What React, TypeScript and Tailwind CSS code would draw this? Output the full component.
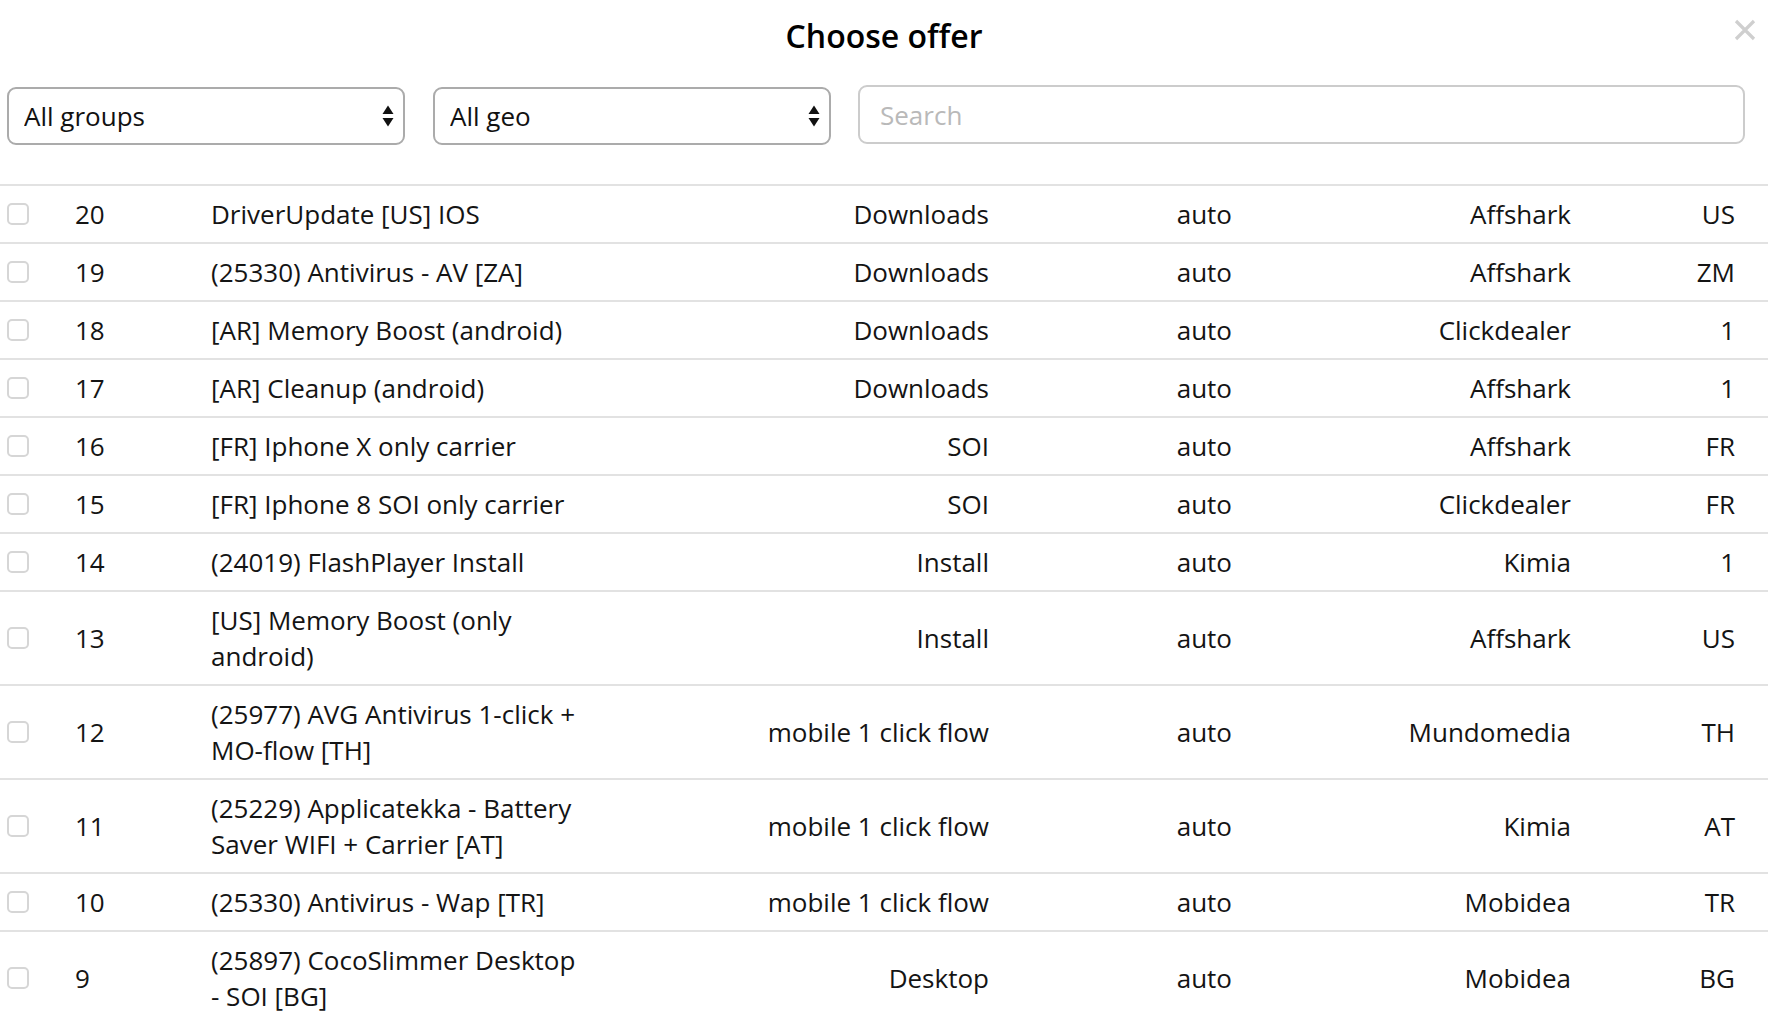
import { useState } from "react";

const offers = [
  { id: 20, name: "DriverUpdate [US] IOS", type: "Downloads", mode: "auto", network: "Affshark", geo: "US" },
  { id: 19, name: "(25330) Antivirus - AV [ZA]", type: "Downloads", mode: "auto", network: "Affshark", geo: "ZM" },
  { id: 18, name: "[AR] Memory Boost (android)", type: "Downloads", mode: "auto", network: "Clickdealer", geo: "1" },
  { id: 17, name: "[AR] Cleanup (android)", type: "Downloads", mode: "auto", network: "Affshark", geo: "1" },
  { id: 16, name: "[FR] Iphone X only carrier", type: "SOI", mode: "auto", network: "Affshark", geo: "FR" },
  { id: 15, name: "[FR] Iphone 8 SOI only carrier", type: "SOI", mode: "auto", network: "Clickdealer", geo: "FR" },
  { id: 14, name: "(24019) FlashPlayer Install", type: "Install", mode: "auto", network: "Kimia", geo: "1" },
  { id: 13, name: "[US] Memory Boost (only android)", type: "Install", mode: "auto", network: "Affshark", geo: "US" },
  { id: 12, name: "(25977) AVG Antivirus 1-click + MO-flow [TH]", type: "mobile 1 click flow", mode: "auto", network: "Mundomedia", geo: "TH" },
  { id: 11, name: "(25229) Applicatekka - Battery Saver WIFI + Carrier [AT]", type: "mobile 1 click flow", mode: "auto", network: "Kimia", geo: "AT" },
  { id: 10, name: "(25330) Antivirus - Wap [TR]", type: "mobile 1 click flow", mode: "auto", network: "Mobidea", geo: "TR" },
  { id: 9, name: "(25897) CocoSlimmer Desktop - SOI [BG]", type: "Desktop", mode: "auto", network: "Mobidea", geo: "BG" },
];

function SelectArrows() {
  return (
    <svg className="pointer-events-none absolute right-[11px] top-1/2 -translate-y-1/2" width="12" height="24" viewBox="0 0 12 24">
      <path d="M6 1.5 L11.5 10 L0.5 10 Z" fill="#111" />
      <path d="M6 22.5 L11.5 14 L0.5 14 Z" fill="#111" />
    </svg>
  );
}

function FakeSelect({ value }: { value: string }) {
  return (
    <div className="relative mt-[2px] w-[398px] h-[58px]">
      <select
        defaultValue={value}
        className="appearance-none w-full h-full rounded-[9px] border-2 border-[#ababab] bg-white pl-[15px] pr-8 text-[26px] text-[#111] outline-none"
      >
        <option>{value}</option>
      </select>
      <SelectArrows />
    </div>
  );
}

export default function App() {
  const [checked, setChecked] = useState<number[]>([]);
  const toggle = (id: number) =>
    setChecked((c) => (c.includes(id) ? c.filter((x) => x !== id) : [...c, id]));

  return (
    <div className="min-h-screen w-full bg-white text-[#141414]" style={{ fontFamily: '"Open Sans", "Noto Sans", sans-serif' }}>
      {/* Header */}
      <div className="relative flex h-[72px] items-center justify-center">
        <h1 className="text-[32px] font-semibold text-black">Choose offer</h1>
        <button className="absolute right-[12px] top-[19px] p-0">
          <svg width="22" height="22" viewBox="0 0 22 22">
            <path d="M2 2 L20 20 M20 2 L2 20" stroke="#cfcfcf" strokeWidth="3.2" />
          </svg>
        </button>
      </div>

      {/* Filters */}
      <div className="mt-[13px] flex items-start pl-[7px] pr-[23px]">
        <FakeSelect value="All groups" />
        <div className="ml-[28px]">
          <FakeSelect value="All geo" />
        </div>
        <input
          placeholder="Search"
          className="ml-[27px] h-[59px] flex-1 rounded-[9px] border-2 border-[#cccccc] px-[20px] text-[26px] outline-none placeholder:text-[#b9b9b9]"
        />
      </div>

      {/* Offers table */}
      <div className="mt-[39px]">
        {offers.map((o) => (
          <div key={o.id} className="flex items-center border-t-2 border-[#e2e2e2] py-[10px] text-[26px] leading-[36px]">
            <div className="w-[75px] pl-[7px]">
              <button
                onClick={() => toggle(o.id)}
                className={`block h-[22px] w-[22px] rounded-[5px] border-2 ${
                  checked.includes(o.id) ? "border-[#4a90e2] bg-[#4a90e2]" : "border-[#d6d6d6] bg-white"
                }`}
              />
            </div>
            <div className="w-[136px]">{o.id}</div>
            <div className="w-[368px]">{o.name}</div>
            <div className="w-[410px] text-right">{o.type}</div>
            <div className="w-[243px] text-right">{o.mode}</div>
            <div className="w-[339px] text-right">{o.network}</div>
            <div className="w-[164px] text-right">{o.geo}</div>
          </div>
        ))}
      </div>
    </div>
  );
}
